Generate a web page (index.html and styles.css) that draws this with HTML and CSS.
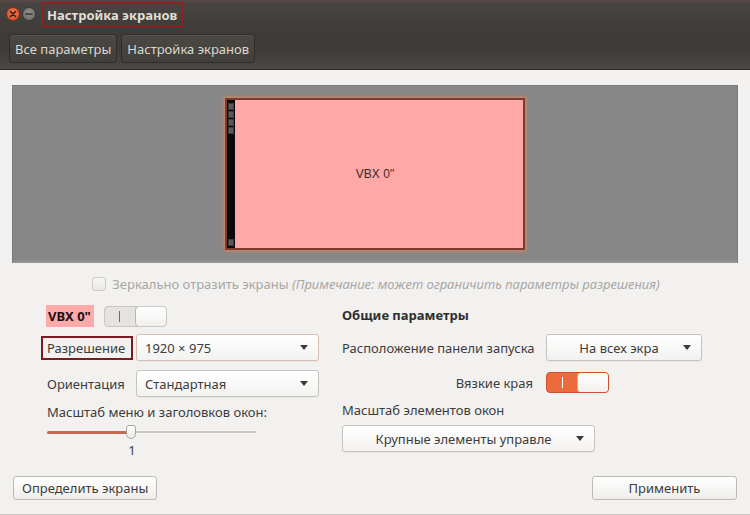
FILE: index.html
```html
<!DOCTYPE html>
<html lang="ru">
<head>
<meta charset="utf-8">
<title>Настройка экранов</title>
<link rel="stylesheet" href="styles.css">
</head>
<body>
<div class="window">
  <header class="header">
    <div class="titlebar">
      <span class="wbtn close"><svg width="12" height="12" viewBox="0 0 12 12"><path d="M3.5 3.5l5 5M8.5 3.5l-5 5" stroke="#3a1a10" stroke-width="1.6" stroke-linecap="round"/></svg></span>
      <span class="wbtn min"><svg width="12" height="12" viewBox="0 0 12 12"><path d="M3 6h6" stroke="#3a3936" stroke-width="1.6" stroke-linecap="round"/></svg></span>
      <span class="title">Настройка экранов</span>
    </div>
    <div class="toolbar">
      <button class="tbtn">Все параметры</button>
      <button class="tbtn">Настройка экранов</button>
    </div>
  </header>

  <main class="content">
    <div class="display-area">
      <div class="monitor">
        <div class="launcher">
          <span class="lic"></span><span class="lic"></span><span class="lic"></span><span class="lic"></span>
          <span class="lspacer"></span>
          <span class="lic"></span>
        </div>
        <div class="monitor-label">VBX 0"</div>
      </div>
    </div>

    <div class="mirror-row">
      <span class="checkbox"></span>
      <span class="mirror-text">Зеркально отразить экраны <i>(Примечание: может ограничить параметры разрешения)</i></span>
    </div>

    <div class="columns">
      <section class="col-left">
        <div class="row row-name">
          <span class="name-label">VBX 0"</span>
          <span class="switch off"><span class="sw-on"><span class="bar"></span></span><span class="knob"></span></span>
        </div>
        <div class="row row-res">
          <span class="label boxed">Разрешение</span>
          <span class="combo wide warm"><span class="combo-text">1920 × 975</span><span class="arrow"></span></span>
        </div>
        <div class="row row-or">
          <span class="label">Ориентация</span>
          <span class="combo wide"><span class="combo-text">Стандартная</span><span class="arrow"></span></span>
        </div>
        <div class="scale-label">Масштаб меню и заголовков окон:</div>
        <div class="slider">
          <span class="track-fill"></span>
          <span class="knob-s"></span>
          <span class="track-rest"></span>
        </div>
        <div class="slider-value">1</div>
      </section>

      <section class="col-right">
        <div class="heading">Общие параметры</div>
        <div class="row row-launcher">
          <span class="rlabel">Расположение панели запуска</span>
          <span class="combo mid"><span class="combo-text center">На всех экра</span><span class="arrow"></span></span>
        </div>
        <div class="row row-sticky">
          <span class="rlabel right">Вязкие края</span>
          <span class="switch on"><span class="sw-on"><span class="bar"></span></span><span class="knob"></span></span>
        </div>
        <div class="scale-label r">Масштаб элементов окон</div>
        <div class="row row-scale">
          <span class="combo big"><span class="combo-text center">Крупные элементы управле</span><span class="arrow"></span></span>
        </div>
      </section>
    </div>

    <div class="footer">
      <button class="btn">Определить экраны</button>
      <button class="btn apply">Применить</button>
    </div>
  </main>
</div>
</body>
</html>
```
FILE: styles.css
```css
* { box-sizing: border-box; }
html, body { margin: 0; padding: 0; }
body {
  width: 750px;
  height: 515px;
  overflow: hidden;
  background: #f2f1f0;
  font-family: "Noto Sans", "DejaVu Sans", sans-serif;
  font-size: 13px;
  color: #3c3c3c;
}
.window { width: 750px; height: 515px; display: flex; flex-direction: column; border-bottom: 1px solid #c9c7c3; }

.header {
  height: 70px;
  background: linear-gradient(#5a4848 0px, #4a4543 3px, #3e3d39 26px, #3d3c38 50px, #4a4944 69px);
  border-bottom: 1px solid #2e2d2a;
}
.titlebar { height: 28px; display: flex; align-items: center; padding-left: 6px; }
.wbtn { width: 14px; height: 14px; border-radius: 50%; display: flex; align-items: center; justify-content: center; margin-right: 2px; }
.wbtn.close { background: radial-gradient(circle at 50% 40%, #f07a55, #d8472a); border: 1px solid #8a2e18; }
.wbtn.min { background: radial-gradient(circle at 50% 40%, #8f8d88, #6b6964); border: 1px solid #3a3936; }
.title {
  margin-left: 3px;
  border: 2px solid #8e1f22;
  padding: 2px 4px 3px;
  color: #e2ded6;
  font-weight: bold;
  font-size: 13px;
  height: 25px;
  line-height: 18px;
}
.toolbar { display: flex; gap: 4px; padding: 6px 0 0 9px; }
.tbtn {
  height: 29px;
  padding: 0 5px;
  background: linear-gradient(#4a4944, #413f3b);
  border: 1px solid #2f2e2b;
  border-radius: 3px;
  color: #dcd8d0;
  font-family: inherit;
  font-size: 13px;
  box-shadow: inset 0 1px 0 rgba(255,255,255,0.06);
}

.content { flex: 1; display: flex; flex-direction: column; padding: 15px 12px 0; }

.display-area {
  height: 178px;
  background: #878787;
  border: 1px solid #7a7a7a;
  border-bottom-color: #9a9a9a;
  display: flex;
  align-items: center;
  justify-content: center;
  box-shadow: inset 0 -2px 0 #8e8e8e;
}
.monitor {
  width: 300px;
  height: 152px;
  background: #ffa8a8;
  border: 2px solid #7d3a30;
  box-shadow: 0 0 3px 1px #d9865e;
  display: flex;
}
.launcher {
  width: 8px;
  background: #0a0a0a;
  display: flex;
  flex-direction: column;
  gap: 1px;
  padding: 3px 1px 2px 1px;
}
.lic { width: 6px; height: 7px; background: #5a5a5a; border: 1px solid #3a3a3a; }
.lspacer { flex: 1; }
.monitor-label {
  flex: 1;
  display: flex;
  align-items: center;
  justify-content: center;
  font-family: "Liberation Sans", "Noto Sans", sans-serif;
  font-size: 12px;
  color: #3a2a2a;
  padding-right: 8px;
}

.mirror-row {
  height: 42px;
  display: flex;
  align-items: center;
  justify-content: center;
  padding-left: 2px;
  color: #a8a7a4;
}
.checkbox {
  width: 14px; height: 14px;
  border: 1px solid #cdcbc8;
  border-radius: 3px;
  background: linear-gradient(#f7f7f6, #e9e8e6);
  margin-right: 6px;
}
.mirror-text i { font-style: italic; }

.columns { display: flex; }
.col-left { width: 330px; padding-left: 29px; display: flex; flex-direction: column; }
.col-right { flex: 1; display: flex; flex-direction: column; }

.row { display: flex; align-items: center; }
.row-name { height: 22px; }
.name-label {
  background: #ffaaaa;
  font-weight: bold;
  color: #1e1010;
  padding: 0 3px 0 2px;
  height: 22px;
  line-height: 22px;
  margin-left: 5px;
}
.switch {
  width: 63px; height: 21px;
  border-radius: 4px;
  display: flex;
  overflow: hidden;
  margin-left: 10px;
}
.switch.off { background: #e4e3e1; border: 1px solid #c9c7c3; }
.switch.on { background: #ec6a3c; border: 1px solid #c9542b; }
.sw-on { width: 30px; display: flex; align-items: center; justify-content: center; }
.bar { width: 1px; height: 11px; }
.switch.off .bar { background: #6b6b6b; }
.switch.on .bar { background: #ffffff; }
.knob {
  flex: 1;
  background: linear-gradient(#ffffff, #f1f0ee);
  border: 1px solid #b9b6b1;
  border-radius: 4px;
  margin: -1px -1px -1px 0;
}

.label { width: 95px; padding-left: 6px; }
.label.boxed {
  border: 2px solid #7a1d22;
  padding: 0 4px;
  height: 24px;
  line-height: 20px;
  width: 92px;
  margin-right: 3px;
}
.row-res { margin-top: 7px; }
.row-or { margin-top: 9px; }
.combo {
  height: 27px;
  display: flex;
  align-items: center;
  background: linear-gradient(#ffffff, #f3f2f1);
  border: 1px solid #c6c3be;
  border-radius: 3px;
  padding: 0 10px 0 8px;
  box-shadow: 0 1px 0 rgba(0,0,0,0.04);
}
.combo.warm { border-color: #d3bfb3; }
.combo.wide { width: 183px; }
.combo.mid { width: 156px; }
.combo.big { width: 253px; }
.combo-text { flex: 1; white-space: nowrap; overflow: hidden; }
.combo-text.center { text-align: center; }
.arrow {
  width: 0; height: 0;
  border-left: 4px solid transparent;
  border-right: 4px solid transparent;
  border-top: 5px solid #3a3a3a;
}
.scale-label { margin-top: 5px; padding-left: 6px; height: 20px; line-height: 20px; }
.slider { display: flex; align-items: center; height: 20px; padding-left: 6px; }
.track-fill { width: 80px; height: 3px; background: #c4684e; border-radius: 2px; }
.knob-s {
  width: 10px; height: 14px;
  background: linear-gradient(#ffffff, #ecebe9);
  border: 1px solid #a9a6a1;
  border-radius: 3px 3px 5px 5px;
  margin: 0 -1px;
  position: relative;
  z-index: 1;
}
.track-rest { width: 121px; height: 2px; background: #c7c6c3; }
.slider-value { width: 176px; text-align: center; padding-left: 6px; line-height: 16px; color: #3c3c3c; }

.heading { font-weight: bold; height: 21px; line-height: 21px; color: #2e2e2e; }
.row-launcher { margin-top: 8px; }
.row-sticky { margin-top: 11px; }
.rlabel { width: 204px; }
.rlabel.right { text-align: right; padding-right: 13px; }
.col-right .switch { margin-left: 0; }
.scale-label.r { padding-left: 0; margin-top: 7px; }
.row-scale { margin-top: 5px; }

.footer { display: flex; justify-content: space-between; margin-top: auto; padding: 0 1px 14px 1px; }
.btn {
  height: 24px;
  background: linear-gradient(#ffffff, #efeeec);
  border: 1px solid #bdbab5;
  border-radius: 3px;
  font-family: inherit;
  font-size: 13px;
  color: #3c3c3c;
  padding: 0 8px;
}
.btn.apply { width: 145px; }
```
